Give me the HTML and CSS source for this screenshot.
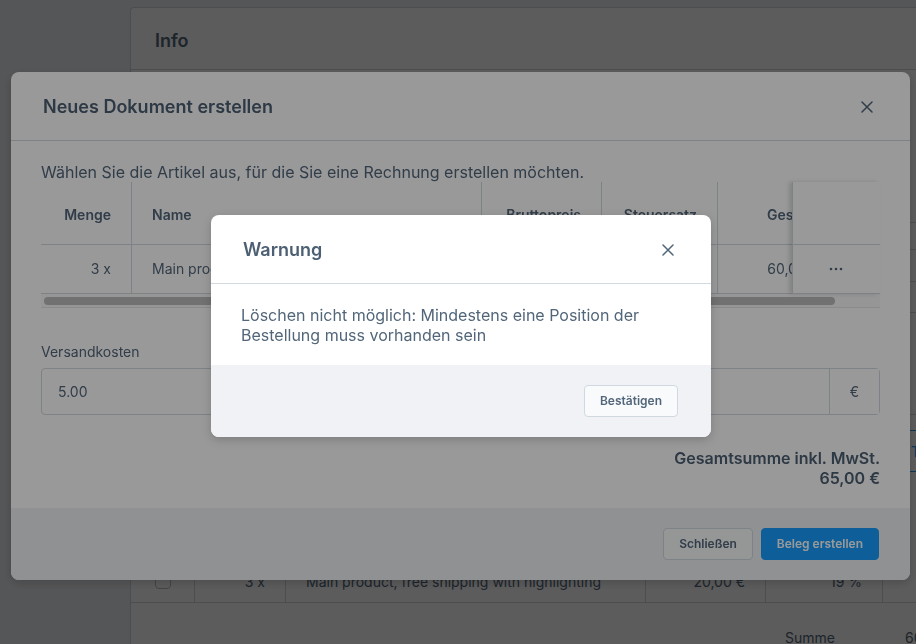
FILE: index.html
```html
<!DOCTYPE html>
<html lang="de">
<head>
<meta charset="utf-8">
<title>Neues Dokument erstellen</title>
<link rel="stylesheet" href="styles.css">
</head>
<body>
<div class="page">
  <aside class="sidebar"></aside>
  <main class="main">
    <section class="card">
      <header class="card-head">Info</header>
      <div class="card-body">
        <div class="bg-block h153"></div>
        <div class="bg-block h27"></div>
        <div class="bg-block h32"></div>
        <div class="bg-block h31"></div>
        <div class="bg-block h102"></div>
        <div class="bg-gap"></div>
        <div class="bg-tab">Tr</div>
        <div class="bg-fill"></div>
      </div>
      <div class="bg-row">
        <div class="bg-cell center"><span class="checkbox"></span></div>
        <div class="bg-cell right">3 x</div>
        <div class="bg-cell">Main product, free shipping with highlighting</div>
        <div class="bg-cell right">20,00 €</div>
        <div class="bg-cell right">19 %</div>
        <div class="bg-cell last"></div>
      </div>
      <div class="bg-sum">
        <span class="sum-label">Summe</span>
        <span class="sum-value">60,00 €</span>
      </div>
    </section>
  </main>
</div>

<div class="overlay"></div>

<div class="modal modal-doc">
  <div class="modal-head">
    <h2 class="modal-title">Neues Dokument erstellen</h2>
    <button class="close" type="button" aria-label="Schließen">
      <svg width="12" height="12" viewBox="0 0 12 12"><path d="M1 1 L11 11 M11 1 L1 11" stroke="#52667a" stroke-width="1.5" stroke-linecap="round" fill="none"/></svg>
    </button>
  </div>
  <div class="modal-body">
    <p class="intro">Wählen Sie die Artikel aus, für die Sie eine Rechnung erstellen möchten.</p>
    <div class="grid">
      <div class="grid-main">
        <div class="scroll">
          <div class="cols head-row">
            <div class="cell right bold">Menge</div>
            <div class="cell bold">Name</div>
            <div class="cell right bold">Bruttopreis</div>
            <div class="cell right bold">Steuersatz</div>
            <div class="cell right bold noborder">Gesamt</div>
          </div>
          <div class="cols body-row">
            <div class="cell right">3 x</div>
            <div class="cell">Main product, free shipping with highlighting</div>
            <div class="cell right">20,00 €</div>
            <div class="cell right">19 %</div>
            <div class="cell right noborder">60,00 €</div>
          </div>
        </div>
        <div class="sticky">
          <div class="sticky-head"></div>
          <div class="sticky-body">
            <svg width="14" height="4" viewBox="0 0 14 4"><circle cx="2" cy="2" r="1.3" fill="#52667a"/><circle cx="7" cy="2" r="1.3" fill="#52667a"/><circle cx="12" cy="2" r="1.3" fill="#52667a"/></svg>
          </div>
        </div>
      </div>
      <div class="scrollbar"><div class="thumb"></div></div>
    </div>
    <label class="field-label">Versandkosten</label>
    <div class="field">
      <div class="field-input">5.00</div>
      <div class="field-suffix">€</div>
    </div>
    <div class="total">
      <div>Gesamtsumme inkl. MwSt.</div>
      <div>65,00 €</div>
    </div>
  </div>
  <div class="modal-foot">
    <button class="btn" type="button">Schließen</button>
    <button class="btn btn-primary" type="button">Beleg erstellen</button>
  </div>
</div>

<div class="overlay"></div>

<div class="modal modal-warn">
  <div class="modal-head">
    <h2 class="modal-title">Warnung</h2>
    <button class="close" type="button" aria-label="Schließen">
      <svg width="12" height="12" viewBox="0 0 12 12"><path d="M1 1 L11 11 M11 1 L1 11" stroke="#52667a" stroke-width="1.5" stroke-linecap="round" fill="none"/></svg>
    </button>
  </div>
  <div class="warn-body">Löschen nicht möglich: Mindestens eine Position der Bestellung muss vorhanden sein</div>
  <div class="modal-foot warn-foot">
    <button class="btn" type="button">Bestätigen</button>
  </div>
</div>
</body>
</html>
```

FILE: styles.css
```css
* { box-sizing: border-box; }

html, body {
  margin: 0;
  padding: 0;
}

body {
  width: 916px;
  height: 644px;
  overflow: hidden;
  font-family: Inter, "Noto Sans", sans-serif;
  color: #52667a;
  background: #eceef1;
}

/* ---------- background page ---------- */
.page {
  display: flex;
  height: 644px;
}

.sidebar {
  width: 130px;
  flex: none;
}

.main {
  flex: 1;
  padding-top: 7px;
  overflow: hidden;
}

.card {
  width: 1000px;
  height: 700px;
  background: #fff;
  border-left: 1px solid #d1d9e0;
  border-top: 1px solid #d1d9e0;
  border-radius: 4px 0 0 0;
}

.card-head {
  height: 62px;
  padding: 4px 0 0 24px;
  display: flex;
  align-items: center;
  font-size: 18px;
  font-weight: 600;
  border-bottom: 1px solid #d1d9e0;
}

.card-body {
  height: 490px;
  display: flex;
  flex-direction: column;
}

.bg-block { border-bottom: 1px solid #d1d9e0; flex: none; }
.h153 { height: 153px; }
.h27 { height: 27px; }
.h32 { height: 32px; }
.h31 { height: 31px; }
.h102 { height: 102px; }
.bg-gap { height: 15px; flex: none; }
.bg-tab {
  height: 42px;
  flex: none;
  margin-left: 774px;
  width: 120px;
  border-top: 1px solid #189eff;
  border-bottom: 1px solid #189eff;
  color: #189eff;
  font-size: 14px;
  display: flex;
  align-items: center;
  padding-left: 6px;
}
.bg-fill { flex: 1; }

.bg-row {
  display: grid;
  grid-template-columns: 64px 91px 360px 120px 117px 200px;
  height: 43px;
  border-bottom: 1px solid #d1d9e0;
  font-size: 14px;
}

.bg-cell {
  border-right: 1px solid #d1d9e0;
  display: flex;
  align-items: center;
  padding: 0 20px;
  white-space: nowrap;
}
.bg-cell.right { justify-content: flex-end; }
.bg-cell.center { justify-content: center; padding: 0; }
.bg-cell.last { border-right: 0; }

.checkbox {
  width: 16px;
  height: 16px;
  border: 1px solid #b3bfcc;
  border-radius: 4px;
  background: #fff;
}

.bg-sum {
  display: flex;
  padding: 26px 0 0 654px;
  font-size: 14px;
}
.sum-value { margin-left: 70px; }

/* ---------- overlays ---------- */
.overlay {
  position: fixed;
  inset: 0;
  background: rgba(0, 0, 0, 0.4);
}

/* ---------- modals ---------- */
.modal {
  position: fixed;
  background: #fff;
  border-radius: 8px;
  overflow: hidden;
  display: flex;
  flex-direction: column;
  box-shadow: 0 3px 10px rgba(0, 0, 0, 0.18);
}

.modal-doc {
  left: 11px;
  top: 72px;
  width: 899px;
  height: 508px;
}

.modal-warn {
  left: 211px;
  top: 215px;
  width: 500px;
  height: 222px;
}

.modal-head {
  height: 69px;
  flex: none;
  display: flex;
  align-items: center;
  justify-content: space-between;
  padding: 1px 31px 0 32px;
  border-bottom: 1px solid #d1d9e0;
}

.modal-title {
  margin: 0;
  font-size: 18px;
  font-weight: 600;
  color: #4c5f73;
}

.close {
  width: 24px;
  height: 24px;
  border: 0;
  padding: 0;
  background: transparent;
  display: flex;
  align-items: center;
  justify-content: center;
}

.modal-body {
  flex: 1;
  padding: 20px 30px 0;
}

.intro {
  margin: 0;
  font-size: 16px;
  line-height: 22px;
  margin-bottom: -1px;
}

/* grid */
.grid-main {
  display: flex;
}

.scroll {
  width: 752px;
  overflow: hidden;
}

.cols {
  display: grid;
  grid-template-columns: 91px 350px 120px 116px 121px;
  width: 798px;
  font-size: 14px;
  border-bottom: 1px solid #d1d9e0;
}

.head-row { height: 63px; }
.body-row { height: 49px; }

.cell {
  display: flex;
  align-items: center;
  padding: 0 20px;
  border-right: 1px solid #d1d9e0;
  white-space: nowrap;
  overflow: hidden;
}
.head-row .cell { padding-top: 2px; }
.body-row .cell { padding-bottom: 1px; }
.cell.right { justify-content: flex-end; }
.cell.bold { font-weight: 600; }
.cell.noborder { border-right: 0; }

.sticky {
  width: 88px;
  flex: none;
  border-left: 1px solid #d1d9e0;
  box-shadow: -3px 0 4px rgba(0, 0, 0, 0.14);
  background: #fff;
  position: relative;
}

.sticky-head {
  height: 63px;
  border-bottom: 1px solid #d1d9e0;
}

.sticky-body {
  height: 49px;
  border-bottom: 1px solid #d1d9e0;
  display: flex;
  align-items: center;
  justify-content: center;
  padding-right: 2px;
}

.scrollbar {
  height: 14px;
  padding: 3px;
  background: #fafafa;
  border-bottom: 1px solid #e5e7ea;
}

.thumb {
  width: 791px;
  height: 8px;
  border-radius: 4px;
  background: #bcbcbc;
}

/* field */
.field-label {
  display: block;
  margin-top: 34px;
  font-size: 14px;
  line-height: 20px;
}

.field {
  margin-top: 6px;
  height: 47px;
  display: flex;
  border: 1px solid #d1d9e0;
  border-radius: 4px;
  font-size: 14px;
}

.field-input {
  flex: 1;
  display: flex;
  align-items: center;
  padding-left: 16px;
}

.field-suffix {
  width: 50px;
  border-left: 1px solid #d1d9e0;
  display: flex;
  align-items: center;
  justify-content: center;
  background: #fff;
}

.total {
  margin-top: 33px;
  text-align: right;
  font-size: 16px;
  font-weight: 600;
  line-height: 20px;
  color: #4c5f73;
}

/* footer */
.modal-foot {
  height: 72px;
  flex: none;
  background: #f0f2f5;
  display: flex;
  justify-content: flex-end;
  align-items: flex-start;
  gap: 8px;
  padding: 20px 31px 0 0;
}

.warn-foot { padding-right: 33px; }

.btn {
  height: 32px;
  padding: 0 15px;
  border: 1px solid #d1d9e0;
  border-radius: 4px;
  background: #f9fafb;
  color: #52667a;
  font-family: Inter, "Noto Sans", sans-serif;
  font-size: 12px;
  font-weight: 600;
  line-height: 30px;
}

.btn-primary {
  background: #189eff;
  border-color: #189eff;
  color: #fff;
}

.warn-body {
  height: 81px;
  flex: none;
  padding: 21px 30px 0;
  font-size: 16px;
  line-height: 20px;
}
```
